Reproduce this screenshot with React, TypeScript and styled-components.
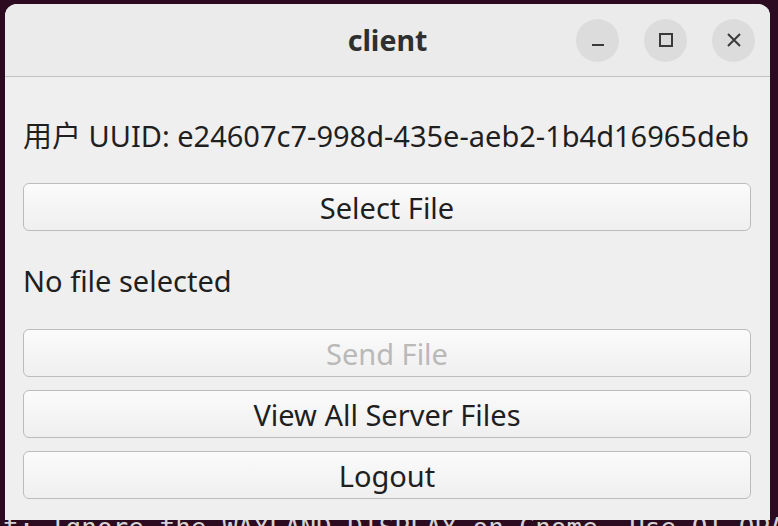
import styled, { createGlobalStyle } from "styled-components";

const GlobalStyle = createGlobalStyle`
  html, body {
    margin: 0;
    padding: 0;
    background: #2c0b20;
  }
`;

const Desktop = styled.div`
  position: relative;
  width: 778px;
  height: 526px;
  overflow: hidden;
  background: #2c0b20;
`;

const Terminal = styled.pre`
  position: absolute;
  left: 3px;
  top: 512px;
  margin: 0;
  font-family: "DejaVu Sans Mono", "Liberation Mono", monospace;
  font-size: 26px;
  line-height: 32px;
  color: #d6d2d4;
  white-space: pre;
`;

const Window = styled.div`
  position: absolute;
  left: 5px;
  top: 4px;
  width: 765px;
  height: 516px;
  display: flex;
  flex-direction: column;
  background: #efefef;
  border-radius: 12px 12px 0 0;
  overflow: hidden;
  font-family: "Noto Sans", "Noto Sans CJK SC", sans-serif;
  color: #1f1f1f;
`;

const TitleBar = styled.header`
  position: relative;
  height: 72px;
  flex: none;
  display: flex;
  align-items: center;
  justify-content: flex-end;
  gap: 25px;
  padding-right: 15px;
  background: #ebebeb;
  border-bottom: 1px solid #c2c2c2;
`;

const Title = styled.h1`
  position: absolute;
  left: 0;
  right: 0;
  top: 0;
  bottom: 0;
  margin: 0;
  display: flex;
  align-items: center;
  justify-content: center;
  font-size: 28.5px;
  font-weight: 700;
  color: #2f2f2f;
  pointer-events: none;
`;

const ControlButton = styled.button`
  position: relative;
  width: 43px;
  height: 43px;
  border-radius: 50%;
  border: none;
  padding: 0;
  background: #dcdcdc;
  display: flex;
  align-items: center;
  justify-content: center;
  color: #3a3a3a;
`;

const Content = styled.main`
  flex: 1;
  display: flex;
  flex-direction: column;
  gap: 13px;
  padding: 21px 19px 0 18px;
`;

const Label = styled.div`
  height: 72px;
  display: flex;
  align-items: center;
  font-size: 29px;
  white-space: nowrap;
`;

const PushButton = styled.button<{ $disabled?: boolean }>`
  height: 48px;
  flex: none;
  border: 1.5px solid #bcbcbc;
  border-radius: 6px;
  background: linear-gradient(#fbfbfb, #efefef);
  font-family: "Noto Sans", sans-serif;
  font-size: 29px;
  color: ${(p) => (p.$disabled ? "#b9b9b9" : "#1f1f1f")};
  padding: 0;
  cursor: default;
`;

export default function App() {
  return (
    <>
      <GlobalStyle />
      <Desktop>
        <Terminal>t: Ignore the WAYLAND_DISPLAY on Gnome. Use QT_QPA_PLATFORM</Terminal>
        <Window>
          <TitleBar>
            <Title>client</Title>
            <ControlButton aria-label="minimize">
              <svg width="16" height="16" viewBox="0 0 16 16">
                <rect x="2" y="12" width="12" height="2" fill="currentColor" />
              </svg>
            </ControlButton>
            <ControlButton aria-label="maximize">
              <svg width="16" height="16" viewBox="0 0 16 16">
                <rect x="2" y="2" width="12" height="12" fill="none" stroke="currentColor" strokeWidth="2" />
              </svg>
            </ControlButton>
            <ControlButton aria-label="close">
              <svg width="16" height="16" viewBox="0 0 16 16">
                <path d="M2 2 L14 14 M14 2 L2 14" stroke="currentColor" strokeWidth="2" />
              </svg>
            </ControlButton>
          </TitleBar>
          <Content>
            <Label>用户 UUID: e24607c7-998d-435e-aeb2-1b4d16965deb</Label>
            <PushButton>Select File</PushButton>
            <Label>No file selected</Label>
            <PushButton $disabled>Send File</PushButton>
            <PushButton>View All Server Files</PushButton>
            <PushButton>Logout</PushButton>
          </Content>
        </Window>
      </Desktop>
    </>
  );
}
